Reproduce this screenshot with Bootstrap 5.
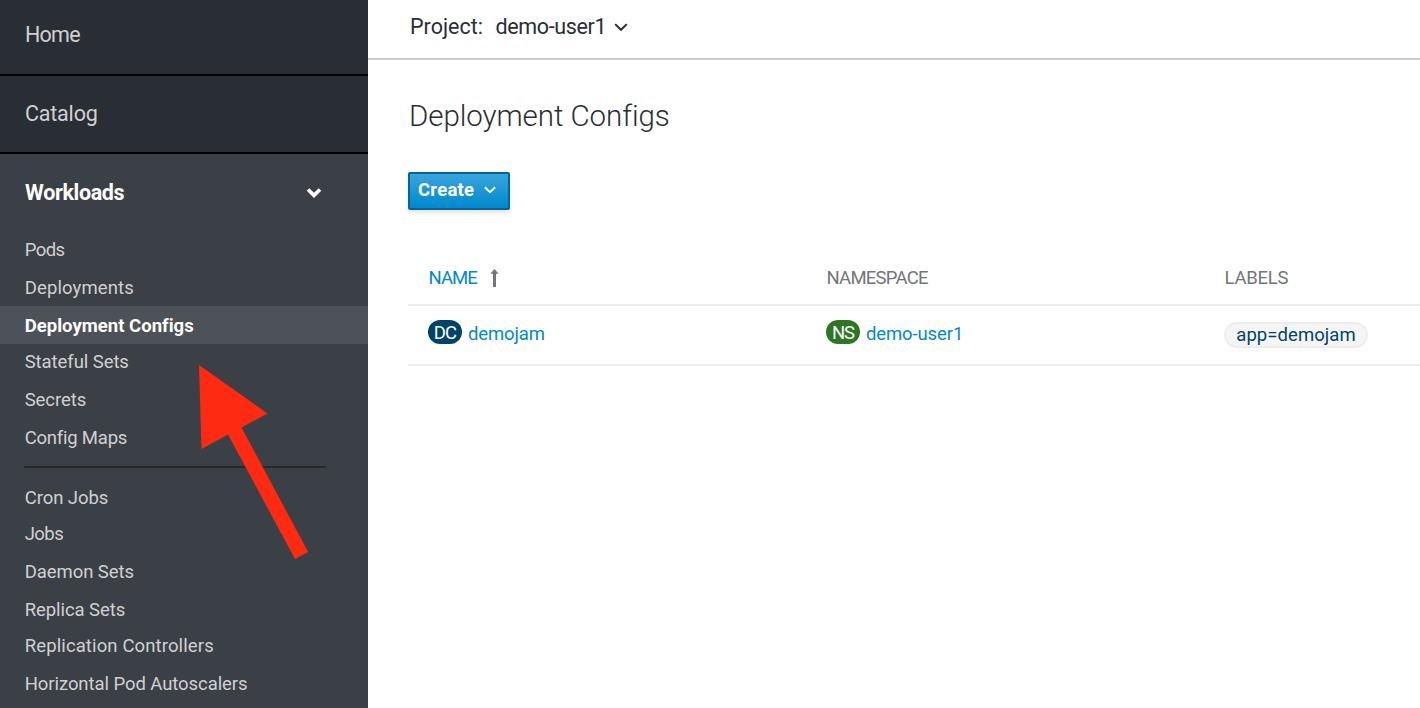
<!DOCTYPE html>
<html lang="en">
<head>
<meta charset="utf-8">
<title>Deployment Configs</title>
<meta name="viewport" content="width=device-width, initial-scale=1">
<link href="https://cdn.jsdelivr.net/npm/bootstrap@5.3.0/dist/css/bootstrap.min.css" rel="stylesheet">
<style>
  body { font-family: Roboto, "Liberation Sans", sans-serif; font-size: 18.5px; color: #292e34; background: #fff; }
  a { text-decoration: none; }
  .console { height: 708px; }
  .sidebar { width: 368px; background: #3b3f46; }
  .side-section { font-size: 21.5px; color: #d1d1d1; background: #292e34; padding-left: 25px; border-bottom: 2px solid #030303; }
  .side-section.home { height: 76px; line-height: 70px; letter-spacing: -.75px; }
  .side-section.catalog { height: 78px; line-height: 75px; letter-spacing: -.2px; }
  .side-open { height: 76px; line-height: 78px; font-size: 21.5px; font-weight: 700; letter-spacing: -.35px; color: #fff; padding: 2px 46px 0 25px; }
  .side-items .nav-link { height: 38px; line-height: 36px; padding: 2px 0 0 24.7px; color: #d1d1d1; white-space: nowrap; letter-spacing: -.07px; }
  .side-items .nav-link.active { height: 38px; margin-bottom: -2px; background: #4d5258; color: #fff; font-weight: 700; letter-spacing: .02px; }
  .side-items .nav-link.shorter { height: 36px; }
  .side-items .nav-link.loose { letter-spacing: .12px; }
  .side-items .nav-link.snug { letter-spacing: -.22px; }
  .side-items .nav-link.tight { letter-spacing: -.55px; }
  .side-rule { height: 2px; margin: 10px 42px 10px 24px; background: #292929; }
  .pointer { left: 190px; top: 355px; pointer-events: none; }
  .project-bar { height: 60px; line-height: 54px; font-size: 21.5px; padding-left: 42px; border-bottom: 2px solid #ccc; letter-spacing: 0; }
  .project-bar .project { margin-left: 12.5px; letter-spacing: -.35px; }
  .project-bar svg { margin: 20px 0 0 8px; }
  .content { padding: 38px 0 0 40px; }
  .page-title { font-size: 29.5px; font-weight: 300; line-height: 36px; letter-spacing: -.07px; margin: 0 0 38px 1px; }
  .btn-create { width: 102px; height: 38px; padding: 0 0 0 8px; border: 2px solid #00659c; border-radius: 2px; color: #fff; font-size: 18.5px; font-weight: 700; letter-spacing: .25px; background-image: linear-gradient(#39a5dc, #0088ce); box-shadow: 0 3px 4px rgba(3,3,3,.1); }
  .btn-create svg { margin: -2px 0 0 10px; }
  .config-table { table-layout: fixed; border-collapse: separate; border-spacing: 0; margin-top: 40px; --bs-table-bg: transparent; }
  .config-table > * > tr > th, .config-table > * > tr > td { padding: 0 0 0 20px; border-width: 0 0 2px; border-bottom: 2px solid #ededed; vertical-align: top; }
  .config-table > thead > tr > th { height: 56px; line-height: 52px; font-weight: 400; color: #72767b; padding: 2px 0 0 20.5px; }
  .config-table > tbody > tr > td { height: 60px; line-height: 56px; }
  .config-table a { color: #0088ce; letter-spacing: -.12px; }
  .config-table th svg { margin: -3px 0 0 13px; }
  .col-fixed { width: 398px; }
  .kind { display: inline-block; width: 34px; height: 24px; line-height: 27px; border-radius: 12px; color: #fff; text-align: center; letter-spacing: -.8px; margin-top: 14px; margin-right: 6px; }
  .kind-dc { background: #004368; }
  .kind-ns { background: #2d7623; letter-spacing: -1.2px; }
  .config-table .label-chip { width: 144px; height: 26px; line-height: 25px; margin-top: 16px; padding-top: 1px; border: 2px solid #ededed; border-radius: 13px; background: #f5f5f5; color: #004368; letter-spacing: .07px; }
</style>
</head>
<body>
<div class="console d-flex position-relative overflow-hidden">
  <nav class="sidebar flex-shrink-0">
    <div class="side-section home">Home</div>
    <div class="side-section catalog">Catalog</div>
    <div class="side-open d-flex justify-content-between align-items-center">
      <span>Workloads</span>
      <svg width="16" height="12" viewBox="0 0 16 12"><path d="M2 2.5 8 8.4l6-5.9" fill="none" stroke="#fff" stroke-width="3.6"/></svg>
    </div>
    <div class="side-items nav flex-column flex-nowrap">
      <a class="nav-link tight" href="#">Pods</a>
      <a class="nav-link loose" href="#">Deployments</a>
      <a class="nav-link active" href="#">Deployment Configs</a>
      <a class="nav-link" href="#">Stateful Sets</a>
      <a class="nav-link" href="#">Secrets</a>
      <a class="nav-link snug" href="#">Config Maps</a>
      <div class="side-rule"></div>
      <a class="nav-link shorter" href="#">Cron Jobs</a>
      <a class="nav-link tight" href="#">Jobs</a>
      <a class="nav-link" href="#">Daemon Sets</a>
      <a class="nav-link shorter" href="#">Replica Sets</a>
      <a class="nav-link loose" href="#">Replication Controllers</a>
      <a class="nav-link" href="#">Horizontal Pod Autoscalers</a>
    </div>
  </nav>
  <main class="flex-grow-1 overflow-hidden">
    <div class="project-bar d-flex align-items-start">
      <span>Project:</span><span class="project">demo-user1</span>
      <svg width="14" height="14" viewBox="0 0 14 14"><path d="M1.2 4.1 7 9.8l5.8-5.7" fill="none" stroke="#292e34" stroke-width="2"/></svg>
    </div>
    <div class="content">
      <h1 class="page-title">Deployment Configs</h1>
      <button class="btn btn-create d-flex align-items-center" type="button">Create
        <svg width="12" height="10" viewBox="0 0 12 10"><path d="M.9 2.2 6 7.2l5.1-5" fill="none" stroke="#fff" stroke-width="1.9"/></svg>
      </button>
      <table class="table config-table mb-0">
        <colgroup><col class="col-fixed"><col class="col-fixed"><col></colgroup>
        <thead>
          <tr>
            <th><a href="#" style="letter-spacing:-.95px">NAME</a><svg width="9" height="18" viewBox="0 0 9 18"><path d="M4.5 0 8.6 4.8H6V18H3V4.8H.4z" fill="#72767b"/></svg></th>
            <th style="letter-spacing:-.75px">NAMESPACE</th>
            <th style="letter-spacing:-.25px">LABELS</th>
          </tr>
        </thead>
        <tbody>
          <tr>
            <td><div class="d-flex"><span class="kind kind-dc">DC</span><a href="#">demojam</a></div></td>
            <td><div class="d-flex"><span class="kind kind-ns">NS</span><a href="#">demo-user1</a></div></td>
            <td><a class="label-chip d-flex justify-content-center align-items-center" href="#">app=demojam</a></td>
          </tr>
        </tbody>
      </table>
    </div>
  </main>
  <svg class="pointer position-absolute" width="125" height="210" viewBox="0 0 125 210"><path d="M9 10 77.5 58.5 51.5 72.5 118.2 197 105 204 38 79.5 11.5 94z" fill="#ff2a12"/></svg>
</div>
<script src="https://cdn.jsdelivr.net/npm/bootstrap@5.3.0/dist/js/bootstrap.bundle.min.js"></script>
</body>
</html>
